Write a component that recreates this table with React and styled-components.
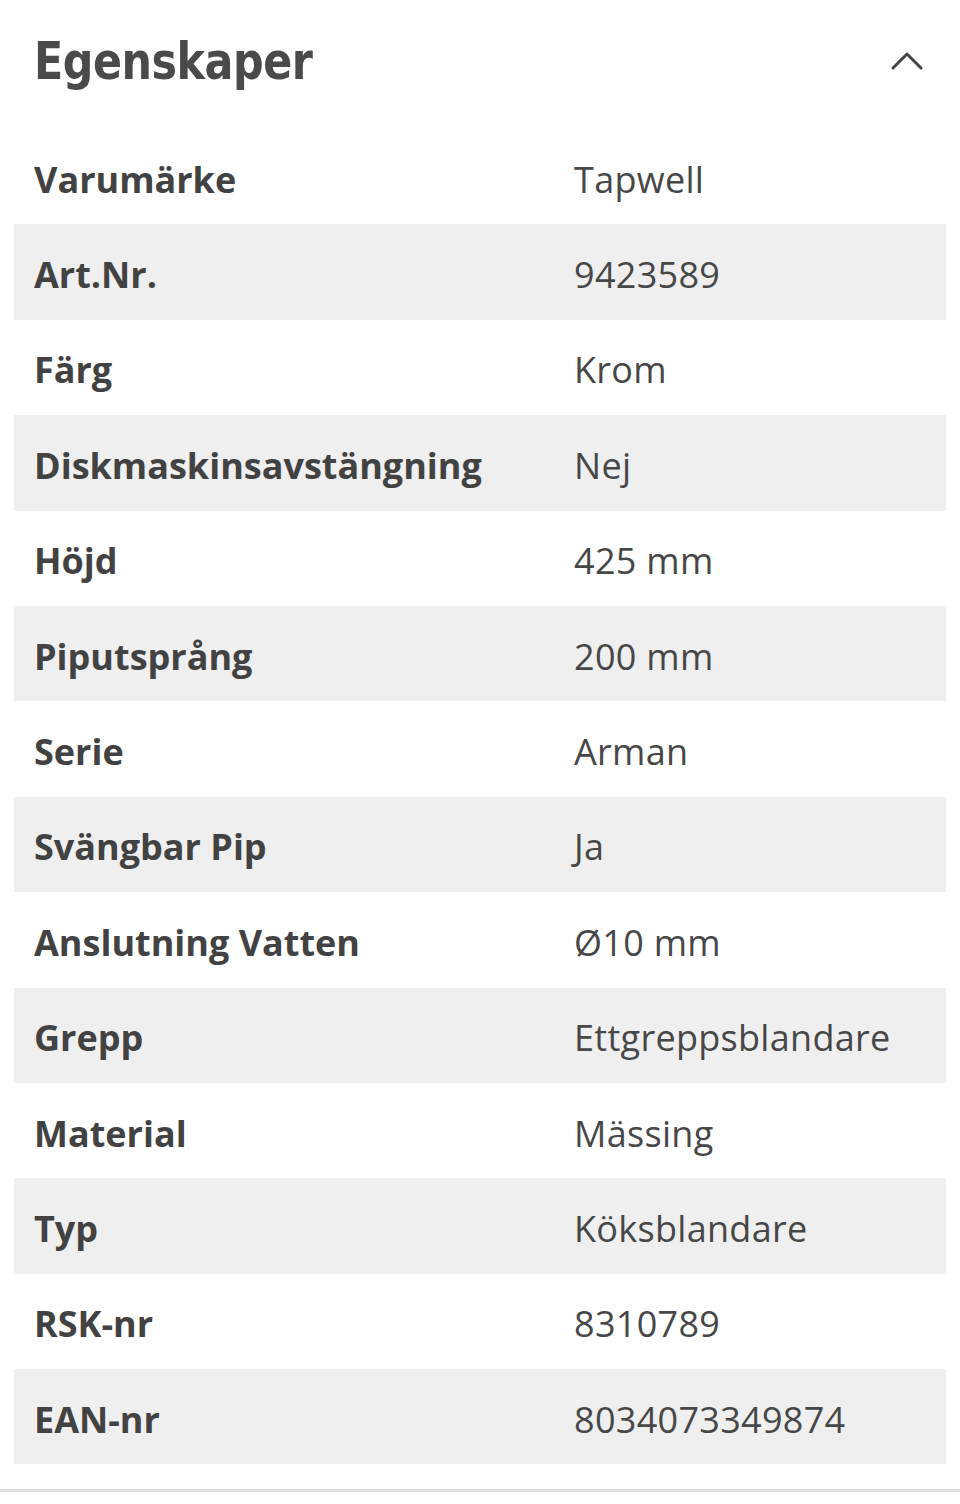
import React from 'react';
import styled, { createGlobalStyle } from 'styled-components';

const GlobalStyle = createGlobalStyle`
  body {
    margin: 0;
    background: #fff;
    font-family: "Open Sans", "Noto Sans", sans-serif;
    color: #444;
  }
`;

const StyledSection = styled.section`
  width: 960px;
  border-bottom: 3px solid #e0e0e0;
  padding-bottom: 25px;
`;

const Header = styled.div`
  display: flex;
  align-items: center;
  justify-content: space-between;
  height: 129px;
  padding: 0 36px 8px 34px;
  box-sizing: border-box;
`;

const Title = styled.h2`
  margin: 0;
  font-family: "DejaVu Sans Condensed", "DejaVu Sans", sans-serif;
  font-weight: 700;
  font-size: 52px;
  letter-spacing: -0.5px;
  color: #4a4a4a;

  span {
    display: inline-block;
    transform: scaleX(0.915);
    transform-origin: 0 50%;
  }
`;

const Toggle = styled.button`
  border: 0;
  background: none;
  padding: 0;
  color: #444;
  display: flex;
  cursor: pointer;

  svg {
    width: 34px;
    height: 20px;
  }
`;

const Table = styled.dl`
  margin: 0 14px;
`;

const Row = styled.div`
  display: grid;
  grid-template-columns: 540px 1fr;
  align-items: center;
  height: 95.4px;
  padding: 5px 20px 0;
  box-sizing: border-box;
  background: ${({ $shaded }) => ($shaded ? '#efefef' : 'transparent')};
`;

const Label = styled.dt`
  font-weight: 700;
  font-size: 36px;
  color: #424242;
`;

const Value = styled.dd`
  margin: 0;
  font-size: 36px;
  letter-spacing: 0.3px;
  color: #474747;
`;

const rows = [
  ['Varumärke', 'Tapwell'],
  ['Art.Nr.', '9423589'],
  ['Färg', 'Krom'],
  ['Diskmaskinsavstängning', 'Nej'],
  ['Höjd', '425 mm'],
  ['Piputsprång', '200 mm'],
  ['Serie', 'Arman'],
  ['Svängbar Pip', 'Ja'],
  ['Anslutning Vatten', 'Ø10 mm'],
  ['Grepp', 'Ettgreppsblandare'],
  ['Material', 'Mässing'],
  ['Typ', 'Köksblandare'],
  ['RSK-nr', '8310789'],
  ['EAN-nr', '8034073349874'],
];

const App = () => (
  <>
    <GlobalStyle />
    <StyledSection>
      <Header>
        <Title>
          <span>Egenskaper</span>
        </Title>
        <Toggle aria-label="Dölj">
          <svg viewBox="0 0 34 20" fill="none">
            <path d="M3 17L17 3L31 17" stroke="currentColor" strokeWidth="3" strokeLinecap="round" strokeLinejoin="round" />
          </svg>
        </Toggle>
      </Header>
      <Table>
        {rows.map(([label, value], i) => (
          <Row key={label} $shaded={i % 2 === 1}>
            <Label>{label}</Label>
            <Value>{value}</Value>
          </Row>
        ))}
      </Table>
    </StyledSection>
  </>
);

export default App;
